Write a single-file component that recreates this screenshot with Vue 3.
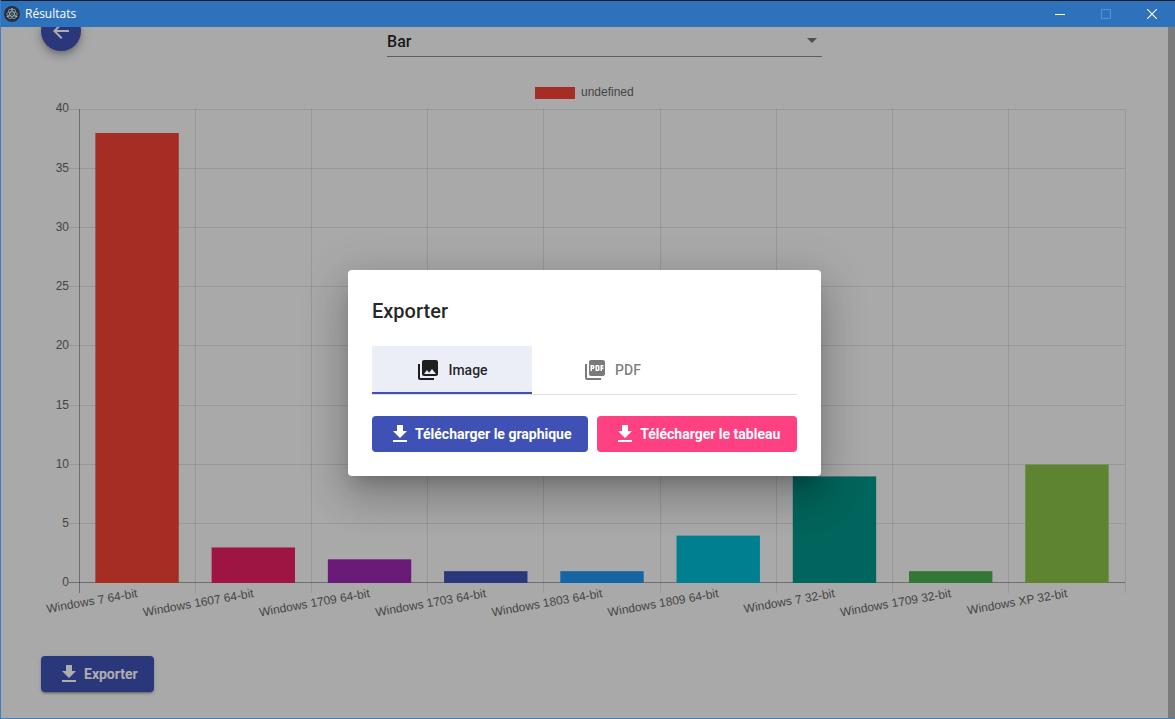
<script setup>
import { ref } from 'vue'

const chartType = ref('bar')
const activeTab = ref('image')

const data = [
  { label: 'Windows 7 64-bit', value: 38, color: '#f44336' },
  { label: 'Windows 1607 64-bit', value: 3, color: '#e91e63' },
  { label: 'Windows 1709 64-bit', value: 2, color: '#9c27b0' },
  { label: 'Windows 1703 64-bit', value: 1, color: '#3f51b5' },
  { label: 'Windows 1803 64-bit', value: 1, color: '#2196f3' },
  { label: 'Windows 1809 64-bit', value: 4, color: '#00bcd4' },
  { label: 'Windows 7 32-bit', value: 9, color: '#009688' },
  { label: 'Windows 1709 32-bit', value: 1, color: '#4caf50' },
  { label: 'Windows XP 32-bit', value: 10, color: '#8bc34a' },
]

// Plot area inside the 1087 x 543 chart
const left = 38
const right = 1084
const top = 32
const bottom = 505.7
const stepX = (right - left + 0.1) / data.length
const unit = (bottom - top) / 40

const bars = data.map((d, i) => ({
  ...d,
  x: left + stepX * i + stepX * 0.14 + 0.1,
  y: bottom + 0.3 - d.value * unit,
  w: stepX * 0.72 - 0.3,
  h: d.value * unit,
  cx: left + stepX * (i + 0.5),
}))
const columns = Array.from({ length: data.length + 1 }, (_, i) => Math.floor(left + stepX * i))
const ticks = Array.from({ length: 9 }, (_, i) => ({
  value: 40 - i * 5,
  y: Math.floor(top + 0.1 + i * 5 * unit),
  textY: Math.floor(top + 0.1 + i * 5 * unit) + (i ? 4 : 3),
}))
</script>

<template>
  <div class="window">
    <header class="titlebar">
      <svg class="app-icon" viewBox="0 0 16 16" aria-hidden="true">
        <circle cx="8" cy="8" r="8" fill="#2b2e3a" />
        <g fill="none" stroke="#9fcbd6" stroke-width="0.6">
          <ellipse cx="8" cy="8" rx="5.4" ry="2.1" />
          <ellipse cx="8" cy="8" rx="5.4" ry="2.1" transform="rotate(60 8 8)" />
          <ellipse cx="8" cy="8" rx="5.4" ry="2.1" transform="rotate(120 8 8)" />
        </g>
        <g fill="#9fcbd6">
          <circle cx="8" cy="8" r="0.6" />
          <circle cx="3.5" cy="10.500" r="0.8" />
          <circle cx="12.5" cy="10.500" r="0.8" />
          <circle cx="8" cy="2.9" r="0.8" />
        </g>
      </svg>
      <span class="title">Résultats</span>
      <button class="win-btn" aria-label="Réduire">
        <svg viewBox="0 0 10 10"><path d="M0 5.5h10" stroke="#fff" /></svg>
      </button>
      <button class="win-btn" aria-label="Agrandir" disabled>
        <svg viewBox="0 0 10 10"><path d="M.5 .5h9v9h-9z" stroke="#5b93d2" fill="none" /></svg>
      </button>
      <button class="win-btn" aria-label="Fermer">
        <svg viewBox="0 0 10 10"><path d="M0 0l10 10M10 0L0 10" stroke="#fff" stroke-width="1.2" /></svg>
      </button>
    </header>

    <div class="body">
      <main class="page">
        <div class="toolbar">
          <button class="fab" aria-label="Retour">
            <svg class="icon" viewBox="0 0 24 24"><path d="M20 11H7.83l5.59-5.59L12 4l-8 8 8 8 1.41-1.41L7.83 13H20v-2z" /></svg>
          </button>
          <div class="select-wrap">
            <select v-model="chartType" class="select" aria-label="Type de graphique">
              <option value="bar">Bar</option>
            </select>
            <svg class="caret" viewBox="0 0 10 5" aria-hidden="true"><path d="M0 0h10L5 5z" /></svg>
          </div>
        </div>

        <svg class="chart" viewBox="0 0 1087 543" role="img" aria-label="Résultats">
          <rect x="494" y="10" width="40" height="12" fill="#f44336" />
          <text x="540" y="19" class="label">undefined</text>

          <g v-for="t in ticks" :key="t.value">
            <rect :x="left - 10" :y="t.y" :width="right - left + 10" height="1" :class="t.value ? 'grid' : 'axis'" />
            <text x="28" :y="t.textY" text-anchor="end" class="label">{{ t.value }}</text>
          </g>
          <rect v-for="(c, i) in columns" :key="c" :x="c" :y="top" width="1" :height="484" :class="i ? 'grid' : 'axis'" />

          <g v-for="b in bars" :key="b.label">
            <rect :x="b.x" :y="b.y" :width="b.w" :height="b.h" :fill="b.color" />
            <text class="label" text-anchor="end" :transform="`translate(${b.cx} 516) rotate(-10)`" y="4">{{ b.label }}</text>
          </g>
        </svg>

        <button class="btn primary export">
          <svg class="icon" viewBox="0 0 24 24"><path d="M19 9h-4V3H9v6H5l7 7 7-7zM5 18v2h14v-2H5z" /></svg>
          <span>Exporter</span>
        </button>
      </main>
      <div class="scrollbar"></div>

      <div class="overlay">
        <section class="dialog" role="dialog" aria-modal="true" aria-labelledby="dialog-title">
          <h2 id="dialog-title">Exporter</h2>
          <div class="tabs" role="tablist">
            <button class="tab" role="tab" :class="{ active: activeTab === 'image' }" :aria-selected="activeTab === 'image'" @click="activeTab = 'image'">
              <svg class="icon" viewBox="0 0 24 24"><path d="M22 16V4c0-1.100-.9-2-2-2H8c-1.100 0-2 .9-2 2v12c0 1.100.9 2 2 2h12c1.100 0 2-.9 2-2zm-11-4l2.030 2.710L16 11l4 5H8l3-4zM2 6v14c0 1.100.9 2 2 2h14v-2H4V6H2z" /></svg>
              <span>Image</span>
            </button>
            <button class="tab" role="tab" :class="{ active: activeTab === 'pdf' }" :aria-selected="activeTab === 'pdf'" @click="activeTab = 'pdf'">
              <svg class="icon" viewBox="0 0 24 24"><path d="M20 2H8c-1.100 0-2 .9-2 2v12c0 1.100.9 2 2 2h12c1.100 0 2-.9 2-2V4c0-1.100-.9-2-2-2zm-8.500 7.500c0 .83-.67 1.500-1.500 1.500H9v2H7.500V7H10c.83 0 1.500.67 1.500 1.500v1zm5 2c0 .83-.67 1.500-1.500 1.500h-2.500V7H15c.83 0 1.500.67 1.500 1.500v3zm4-3H19v1h1.500V11H19v2h-1.500V7h3v1.500zM9 9.500h1v-1H9v1zM4 6H2v14c0 1.100.9 2 2 2h14v-2H4V6zm10 5.500h1v-3h-1v3z" /></svg>
              <span>PDF</span>
            </button>
          </div>
          <div class="actions">
            <button class="btn primary">
              <svg class="icon" viewBox="0 0 24 24"><path d="M19 9h-4V3H9v6H5l7 7 7-7zM5 18v2h14v-2H5z" /></svg>
              <span>Télécharger le graphique</span>
            </button>
            <button class="btn accent">
              <svg class="icon" viewBox="0 0 24 24"><path d="M19 9h-4V3H9v6H5l7 7 7-7zM5 18v2h14v-2H5z" /></svg>
              <span>Télécharger le tableau</span>
            </button>
          </div>
        </section>
      </div>
    </div>
  </div>
</template>

<style>
body {
  margin: 0;
  overflow: hidden;
}
</style>

<style scoped>
.window {
  box-sizing: border-box;
  height: 100vh;
  display: flex;
  flex-direction: column;
  border: solid #3c7fc6;
  border-width: 0 0 1px 1px;
  font-family: Roboto, sans-serif;
  color: rgba(0, 0, 0, 0.87);
}
button {
  border: 0;
  padding: 0;
  font-family: inherit;
  cursor: pointer;
}
.titlebar {
  box-sizing: border-box;
  flex: none;
  height: 27px;
  display: flex;
  align-items: center;
  padding-left: 3px;
  background: #2f72bc;
  border-top: 1px solid #1b1d26;
  color: #fff;
}
.app-icon {
  width: 16px;
  height: 16px;
}
.title {
  flex: 1;
  margin-left: 5px;
  font: 12px/16px "Open Sans", sans-serif;
}
.win-btn {
  width: 46px;
  height: 26px;
  display: flex;
  align-items: center;
  justify-content: center;
  background: none;
}
.win-btn svg {
  width: 10px;
  height: 10px;
}
.body {
  position: relative;
  flex: 1;
  min-height: 0;
  display: flex;
  overflow: hidden;
  background: #fafafa;
}
.page {
  flex: 1;
  min-width: 0;
  padding: 0 40px;
  margin-top: -16px;
}
.scrollbar {
  width: 7px;
  background: #b5b5b5;
}
.toolbar {
  display: flex;
  height: 66px;
}
.fab {
  width: 40px;
  height: 40px;
  border-radius: 50%;
  display: flex;
  align-items: center;
  justify-content: center;
  background: #3f51b5;
  color: #fff;
  box-shadow: 0 3px 5px -1px rgba(0, 0, 0, 0.2), 0 6px 10px rgba(0, 0, 0, 0.14), 0 1px 18px rgba(0, 0, 0, 0.12);
}
.icon {
  width: 24px;
  height: 24px;
  flex: none;
  fill: currentColor;
}
.select-wrap {
  position: relative;
  width: 40%;
  height: 46px;
  margin: 0 auto;
}
.select {
  width: 100%;
  height: 46px;
  padding: 16px 0 0;
  appearance: none;
  border: 0;
  border-bottom: 1px solid #8b8b8b;
  border-radius: 0;
  background: none;
  color: rgba(0, 0, 0, 0.87);
  font: 500 16px/24px Roboto, sans-serif;
}
.caret {
  position: absolute;
  right: 5px;
  top: 27px;
  width: 10px;
  height: 5px;
  fill: #737373;
}
.chart {
  display: block;
  width: 100%;
}
.label {
  font: 12px "Liberation Sans", Arial, sans-serif;
  fill: #666;
}
.grid {
  fill: rgba(0, 0, 0, 0.1);
}
.axis {
  fill: rgba(0, 0, 0, 0.35);
}
.btn {
  height: 36px;
  padding: 0 16px;
  display: inline-flex;
  align-items: center;
  gap: 3px;
  border-radius: 4px;
  color: #fff;
  font-size: 14px;
  font-weight: 700;
  line-height: 36px;
  white-space: nowrap;
}
.primary {
  background: #3f51b5;
}
.accent {
  background: #ff4081;
}
.export {
  margin-top: 36px;
  box-shadow: 0 3px 1px -2px rgba(0, 0, 0, 0.2), 0 2px 2px rgba(0, 0, 0, 0.14), 0 1px 5px rgba(0, 0, 0, 0.12);
}
.overlay {
  position: absolute;
  inset: 0;
  padding-right: 7px;
  display: flex;
  align-items: center;
  justify-content: center;
  background: rgba(0, 0, 0, 0.32);
}
.dialog {
  min-width: 425px;
  padding: 24px;
  border-radius: 4px;
  background: #fff;
  box-shadow: 0 11px 15px -7px rgba(0, 0, 0, 0.2), 0 24px 38px 3px rgba(0, 0, 0, 0.14), 0 9px 46px 8px rgba(0, 0, 0, 0.12);
}
h2 {
  margin: 0 0 18px;
  font-size: 20px;
  font-weight: 500;
  line-height: 34px;
}
.tabs {
  display: flex;
  border-bottom: 1px solid rgba(0, 0, 0, 0.12);
}
.tab {
  box-sizing: border-box;
  width: 160px;
  height: 48px;
  display: flex;
  align-items: center;
  justify-content: center;
  gap: 8px;
  background: none;
  border-bottom: 2px solid transparent;
  padding-top: 2px;
  color: rgba(0, 0, 0, 0.52);
  font-size: 14px;
  font-weight: 500;
}
.tab.active {
  background: #ebedf7;
  border-bottom-color: #3f51b5;
  color: rgba(0, 0, 0, 0.87);
}
.actions {
  display: flex;
  gap: 9px;
  margin-top: 21px;
}
.actions .btn {
  flex: 1 1 auto;
}
</style>
